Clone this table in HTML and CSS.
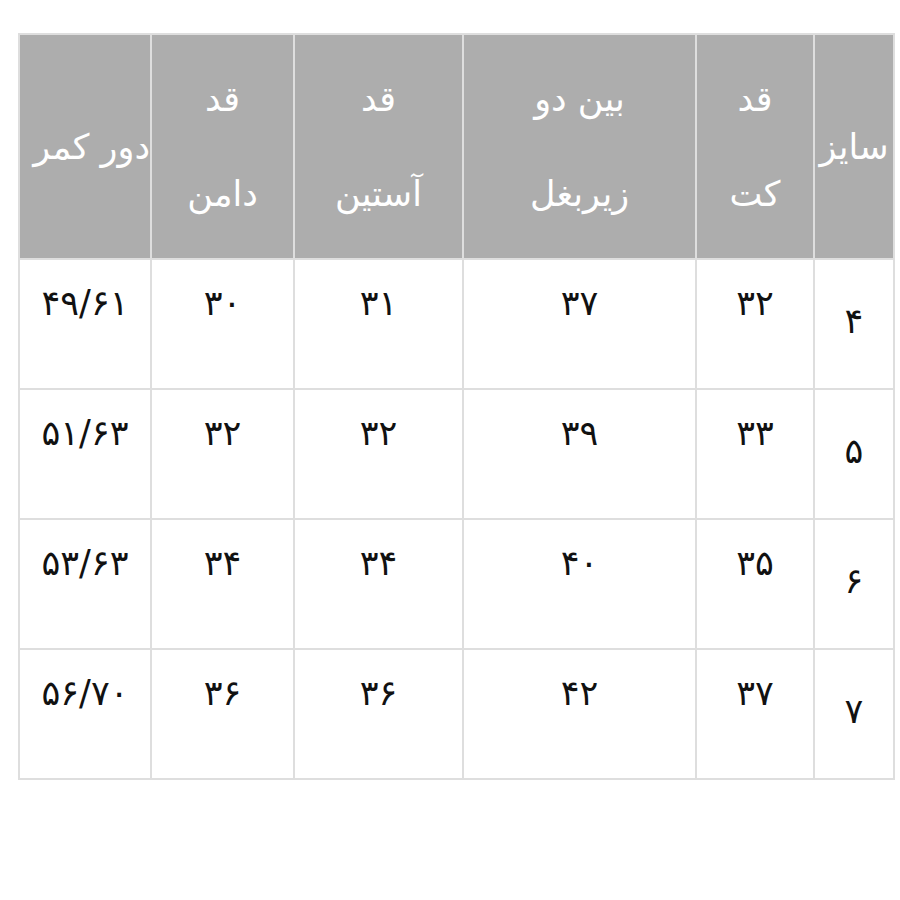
FILE: index.html
```html
<!DOCTYPE html>
<html lang="fa" dir="rtl">
<head>
<meta charset="utf-8">
<link rel="stylesheet" href="styles.css">
</head>
<body>
<div class="wrap">
<table class="sizes">
  <colgroup>
    <col class="c-size"><col class="c-coat"><col class="c-chest"><col class="c-sleeve"><col class="c-skirt"><col class="c-waist">
  </colgroup>
  <thead>
    <tr>
      <th class="single">سایز</th>
      <th>قد<br>کت</th>
      <th>بین دو<br>زیربغل</th>
      <th>قد<br>آستین</th>
      <th>قد<br>دامن</th>
      <th class="single waist">دور کمر</th>
    </tr>
  </thead>
  <tbody>
    <tr><td class="size">۴</td><td>۳۲</td><td>۳۷</td><td>۳۱</td><td>۳۰</td><td class="num">۴۹/۶۱</td></tr>
    <tr><td class="size">۵</td><td>۳۳</td><td>۳۹</td><td>۳۲</td><td>۳۲</td><td class="num">۵۱/۶۳</td></tr>
    <tr><td class="size">۶</td><td>۳۵</td><td>۴۰</td><td>۳۴</td><td>۳۴</td><td class="num">۵۳/۶۳</td></tr>
    <tr><td class="size">۷</td><td>۳۷</td><td>۴۲</td><td>۳۶</td><td>۳۶</td><td class="num">۵۶/۷۰</td></tr>
  </tbody>
</table>
</div>
</body>
</html>
```

FILE: styles.css
```css
html, body {
  margin: 0;
  padding: 0;
  background: #ffffff;
}

.wrap {
  padding: 33px 7px 0 18px;
  display: flex;
  justify-content: flex-end;
}

.sizes {
  width: 875px;
  table-layout: fixed;
  border-collapse: collapse;
  font-family: "DejaVu Sans", sans-serif;
  color: #111111;
}

.c-size { width: 80px; }
.c-coat { width: 118px; }
.c-chest { width: 233px; }
.c-sleeve { width: 169px; }
.c-skirt { width: 143px; }
.c-waist { width: 132px; }

.sizes th,
.sizes td {
  border: 2px solid #dedede;
  text-align: center;
  padding: 0;
}

.sizes th {
  background: #adadad;
  color: #ffffff;
  font-weight: normal;
  font-size: 35px;
  line-height: 95px;
  height: 223px;
  vertical-align: middle;
}

.sizes th.single {
  line-height: 40px;
  white-space: nowrap;
}

.sizes th.waist {
  text-align: right;
  overflow: hidden;
  padding-right: 0;
}

.sizes td {
  height: 130px;
  font-size: 35px;
  line-height: 50px;
  vertical-align: top;
  padding-top: 18px;
  box-sizing: border-box;
}

.sizes td.size {
  vertical-align: middle;
  padding-top: 0;
  padding-bottom: 6px;
}

.sizes td.num {
  white-space: nowrap;
  direction: ltr;
  overflow: hidden;
}
```
